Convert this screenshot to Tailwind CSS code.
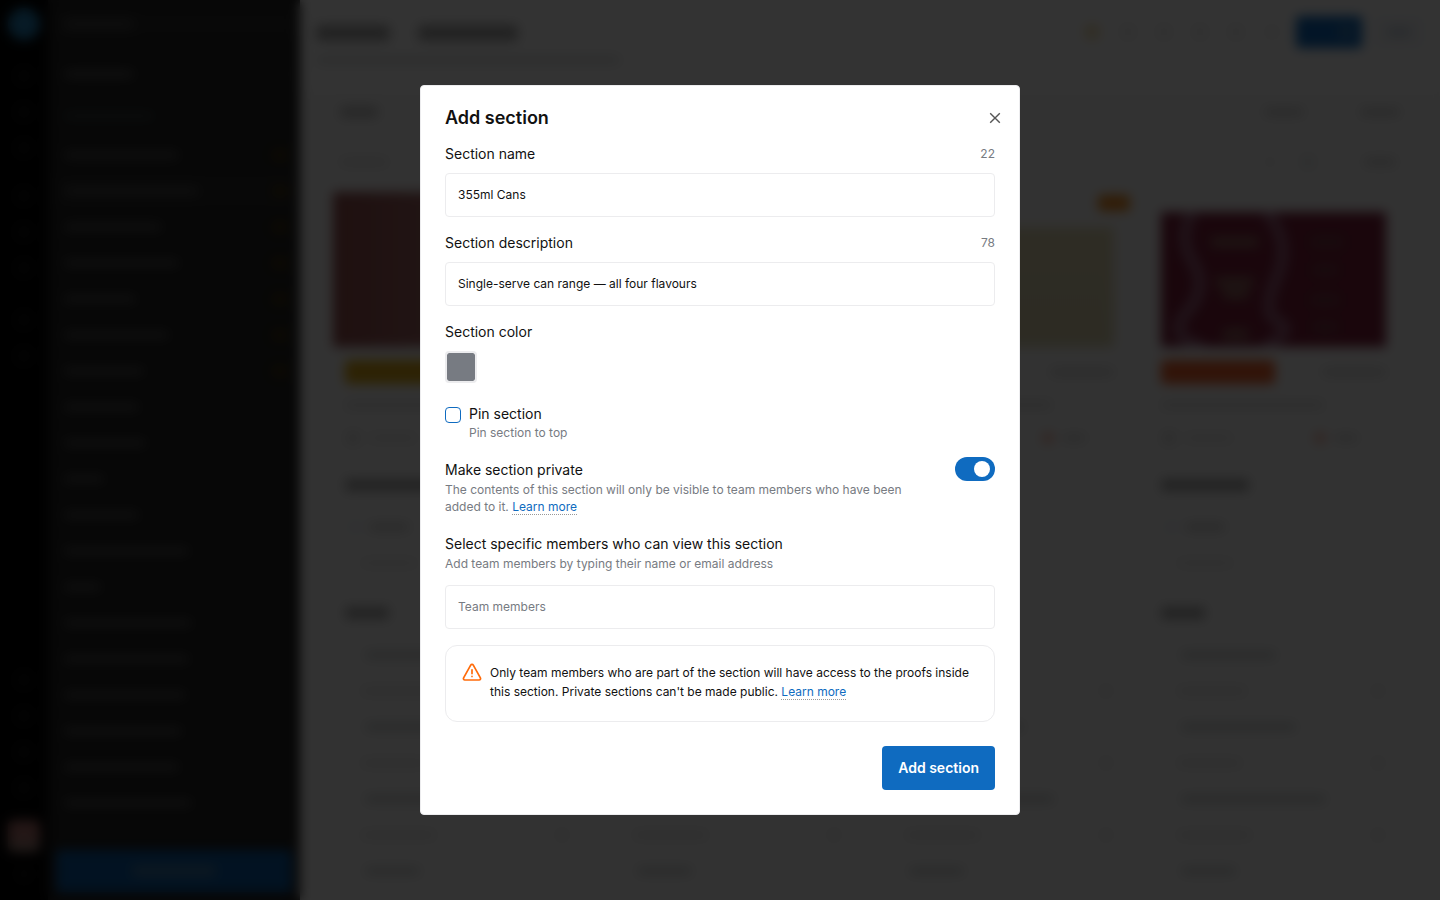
<!DOCTYPE html>
<html lang="en">
<head>
    <meta charset="UTF-8">
    <meta name="viewport" content="width=device-width, initial-scale=1.0">
    <title>Add section</title>
    <script src="https://cdn.jsdelivr.net/npm/@tailwindcss/browser@4"></script>
</head>
<body class="font-['Inter',sans-serif] text-[#111] bg-white h-screen overflow-hidden">

    <!-- Page behind the dialog -->
    <div class="flex h-screen overflow-hidden" aria-hidden="true" inert>
        <nav class="w-12 shrink-0 bg-[#030303] flex flex-col items-center justify-between pt-2 pb-5">
            <div class="flex flex-col items-center">
                <div class="size-8 rounded-full bg-[#2484bd]"></div>
                <div class="rail flex flex-col items-center gap-5 mt-7" data-count="3"></div>
                <div class="rail flex flex-col items-center gap-5 mt-8" data-count="3"></div>
                <div class="rail flex flex-col items-center gap-5 mt-9" data-count="2"></div>
            </div>
            <div class="flex flex-col items-center">
                <div class="rail flex flex-col items-center gap-5 mb-6" data-count="4"></div>
                <div class="size-8 rounded-md overflow-hidden bg-[#a08078]">
                    <div class="h-5 bg-[#b0706c]"></div>
                </div>
                <div class="size-3 rounded-full bg-[#151515] mt-4"></div>
            </div>
        </nav>

        <aside class="w-[252px] shrink-0 bg-[#232323] flex flex-col pl-2 pr-2 pt-3">
            <div class="h-6 shrink-0 bg-[#292929] rounded flex items-center px-2">
                <div class="w-[70px] h-3 rounded bg-[#444]"></div>
            </div>
            <div class="h-[76px] shrink-0 flex items-center justify-between px-2">
                <div class="w-[70px] h-2 rounded bg-[#555]"></div>
                <div class="size-2 rounded bg-[#333]"></div>
            </div>
            <div class="h-[25px] shrink-0 flex items-start px-2">
                <div class="w-[90px] h-2 rounded bg-[#364040]"></div>
            </div>
            <div id="sideList" class="flex-1 overflow-hidden"></div>
            <button class="h-[42px] w-full shrink-0 mb-2 rounded bg-[#0b5ca8] flex items-center justify-center">
                <span class="w-[84px] h-3 rounded bg-[#3f76a6]"></span>
            </button>
        </aside>

        <main class="flex-1 min-w-0 bg-white flex flex-col">
            <header class="flex justify-between h-[92px] shrink-0 pl-4 pr-4">
                <div class="pt-[25px]">
                    <div class="flex gap-7">
                        <div class="w-[74px] h-4 rounded bg-[#a8a8a8]"></div>
                        <div class="w-[100px] h-4 rounded bg-[#a8a8a8]"></div>
                    </div>
                    <div class="w-[304px] h-2 rounded bg-[#dde0e0] mt-[15px]"></div>
                </div>
                <div class="flex items-center h-16">
                    <div class="flex gap-5 mr-4">
                        <div class="size-4 rounded-full bg-[#f4e0ae]"></div>
                        <div class="size-4 rounded-full bg-[#f0f0f0]"></div>
                        <div class="size-4 rounded-full bg-[#f0f0f0]"></div>
                        <div class="size-4 rounded-full bg-[#f0f0f0]"></div>
                        <div class="size-4 rounded-full bg-[#f0f0f0]"></div>
                        <div class="size-4 rounded-full bg-[#f5f5f5]"></div>
                    </div>
                    <div class="w-[66px] h-8 rounded bg-[#0f6bc0] flex items-center justify-end pr-2 mr-3">
                        <div class="w-4 h-3 rounded bg-[#3f80bd]"></div>
                    </div>
                    <div class="w-[50px] h-8 rounded bg-[#f6f8fb] flex items-center justify-center">
                        <div class="w-6 h-2 rounded bg-[#c6d2de]"></div>
                    </div>
                </div>
            </header>
            <div class="flex-1 bg-[#fafafa] overflow-hidden">
                <div class="flex items-center justify-between h-10 pl-10 pr-10">
                    <div class="w-[38px] h-3 rounded bg-[#c4c4c4]"></div>
                    <div class="flex gap-14">
                        <div class="w-10 h-2 rounded bg-[#d0d0d0]"></div>
                        <div class="w-10 h-2 rounded bg-[#d0d0d0]"></div>
                    </div>
                </div>
                <div class="flex items-center justify-between h-[60px] pl-10 pr-11">
                    <div class="w-12 h-2 rounded bg-[#e2e2e2]"></div>
                    <div class="flex items-center gap-6">
                        <div class="size-3 rounded-full bg-[#efefef]"></div>
                        <div class="size-4 rounded-full bg-[#e7ebeb]"></div>
                        <div class="w-8 h-2 rounded bg-[#d2d2d2] ml-6"></div>
                    </div>
                </div>
                <div id="board" class="grid grid-cols-4 gap-[47px] pl-[45px] pr-[54px]"></div>
            </div>
        </main>
    </div>

    <!-- Backdrop and dialog -->
    <div class="fixed inset-0 flex items-center justify-center bg-black/80 backdrop-blur-[6px]">
        <form role="dialog" aria-modal="true" aria-labelledby="dialogTitle" class="w-full max-w-[600px] bg-white border border-[#ececee] rounded px-6 pt-5 pb-6" onsubmit="return false">
            <div class="flex items-center justify-between h-6 mb-[14px]">
                <h1 id="dialogTitle" class="text-[18px] leading-[26px] font-semibold">Add section</h1>
                <button type="button" aria-label="Close" class="size-4 -mr-2 flex items-center justify-center cursor-pointer">
                    <svg class="size-4" viewBox="0 0 16 16" fill="none" stroke="#555" stroke-width="1.4"><path d="M3.2 3.2l9.6 9.6M12.8 3.2l-9.6 9.6"/></svg>
                </button>
            </div>

            <div class="flex items-center justify-between mb-[9px]">
                <label for="sectionName" class="text-sm leading-5">Section name</label>
                <span class="text-xs text-[#777b82]">22</span>
            </div>
            <input id="sectionName" type="text" value="355ml Cans" class="block w-full h-11 px-3 pb-0.5 text-xs border border-[#ececee] rounded mb-4 focus:outline-none">

            <div class="flex items-center justify-between mb-[9px]">
                <label for="sectionDescription" class="text-sm leading-5">Section description</label>
                <span class="text-xs text-[#777b82]">78</span>
            </div>
            <input id="sectionDescription" type="text" value="Single-serve can range — all four flavours" class="block w-full h-11 px-3 pb-0.5 text-xs border border-[#ececee] rounded mb-4 focus:outline-none">

            <label for="sectionColor" class="block text-sm leading-5 mb-[9px]">Section color</label>
            <input id="sectionColor" type="color" value="#777b82" class="block size-8 appearance-none border-2 border-[#ececee] rounded p-0 bg-transparent cursor-pointer [&::-webkit-color-swatch-wrapper]:p-0 [&::-webkit-color-swatch]:border-none [&::-webkit-color-swatch]:rounded-[2px]">

            <div class="flex items-start gap-2 mt-[21px]">
                <input id="pinSection" type="checkbox" class="size-4 mt-[3px] appearance-none border border-[#0f6bc0] rounded bg-white checked:bg-[#0f6bc0]">
                <div>
                    <label for="pinSection" class="block text-sm leading-5">Pin section</label>
                    <p class="text-xs leading-[18px] text-[#777b82]">Pin section to top</p>
                </div>
            </div>

            <div class="flex items-start justify-between mt-[18px]">
                <div class="max-w-[480px]">
                    <label for="privateSection" class="block text-sm leading-5">Make section private</label>
                    <p class="text-xs leading-[17px] text-[#777b82] mt-px">The contents of this section will only be visible to team members who have been added to it. <a href="#" class="text-[#0f6bc0] border-b border-dotted border-[#999]">Learn more</a></p>
                </div>
                <input id="privateSection" type="checkbox" role="switch" checked class="w-10 h-6 -mt-[3px] p-1 shrink-0 appearance-none rounded-full bg-[#b4b7bc] checked:bg-[#0f6bc0] before:block before:size-4 before:rounded-full before:bg-white checked:before:ml-[15px]">
            </div>

            <label for="teamMembers" class="block text-sm leading-5 mt-[19px]">Select specific members who can view this section</label>
            <p class="text-xs leading-[17px] text-[#777b82] mt-px">Add team members by typing their name or email address</p>
            <input id="teamMembers" type="text" placeholder="Team members" class="block w-full h-11 px-3 pb-0.5 text-xs border border-[#ececee] rounded mt-[13px] placeholder:text-[#777b82] focus:outline-none">

            <div class="flex gap-2 border border-[#ececee] rounded-xl px-4 pt-[17px] pb-5 mt-4">
                <svg class="size-5 shrink-0" viewBox="0 0 20 20" fill="none" stroke="#ff6b0a" stroke-width="1.7" stroke-linecap="round" stroke-linejoin="round">
                    <path d="M8.7 2.1 1.6 14.9a1.4 1.4 0 0 0 1.2 2.1h14.4a1.4 1.4 0 0 0 1.2-2.1L11.3 2.1a1.5 1.5 0 0 0-2.6 0z"/>
                    <path d="M10 6.8v3.8"/>
                    <path d="M10 13.4v.1"/>
                </svg>
                <p class="text-xs leading-[19px]">Only team members who are part of the section will have access to the proofs inside this section. Private sections can't be made public. <a href="#" class="text-[#0f6bc0] border-b border-dotted border-[#999]">Learn more</a></p>
            </div>

            <div class="flex justify-end mt-6">
                <button type="submit" class="h-11 px-4 rounded bg-[#0f6bc0] text-white text-sm font-semibold hover:bg-[#0d5ea8] cursor-pointer">Add section</button>
            </div>
        </form>
    </div>

    <script>
        const sideRows = [115, 135, 98, 115, 72, 105, 80, 75, 82, 40, 75, 125, 37, 128, 125, 122, 118, 115, 128];
        const cardRows = [95, 70, 115, 65, 145, 75, 55];

        // Rail icons
        document.querySelectorAll('.rail').forEach(rail => {
            rail.innerHTML = '<div class="size-4 rounded-full bg-[#111]"></div>'.repeat(rail.dataset.count);
        });

        // Sidebar rows, the first seven carry a badge
        document.getElementById('sideList').innerHTML = sideRows.map((width, i) => `
            <div class="h-9 flex items-center justify-between pl-2 pr-1 rounded ${i === 1 ? 'bg-[#292929]' : ''}">
                <div class="h-2 rounded bg-[#505050]" style="width:${width}px"></div>
                ${i < 7 ? '<div class="w-4 h-3 rounded bg-[#443410]"></div>' : ''}
            </div>`).join('');

        const covers = [
            '<div class="h-[156px] -ml-3 bg-linear-to-r from-[#97504f] to-[#b58585]"></div>',
            '<div class="h-[135px] bg-[#b9b9b9]"></div>',
            '<div class="h-4 w-8 -mr-4 self-end rounded bg-[#f08c1e] mb-4"></div><div class="h-[120px] bg-linear-to-b from-[#e6dcb4] to-[#ddd6b0]"></div>',
            `<svg class="w-full h-[135px] bg-[#80203c]" viewBox="0 0 226 135" preserveAspectRatio="none" fill="none">
                <path d="M32 0Q16 24 32 50T26 100T42 135M106 0Q132 30 116 66T118 110T104 135" stroke="#a0607e" stroke-width="12"/>
                <path d="M50 30h48M55 70h38M62 82h26M62 122h26" stroke="#94645f" stroke-width="11"/>
                <path d="M150 30h34M152 58h26M150 88h30M152 115h26" stroke="#7a3844" stroke-width="14"/>
            </svg>`
        ];
        const tags = ['bg-[#e0aa14]', 'bg-[#e0aa14]', 'bg-[#e0aa14]', 'bg-[#f4632c]'];

        document.getElementById('board').innerHTML = covers.map((cover, i) => `
            <div>
                <div class="h-[155px] flex flex-col justify-end">${cover}</div>
                <div class="flex items-center justify-between h-[50px]">
                    <div class="w-[114px] h-6 rounded ${tags[i]}"></div>
                    <div class="w-16 h-2 rounded bg-[#d8d8d8]"></div>
                </div>
                <div class="w-[163px] h-2 rounded bg-[#dedede] mt-1"></div>
                <div class="flex items-center gap-2 h-[58px]">
                    <div class="size-4 rounded-full bg-[#e2e2e2]"></div>
                    <div class="w-12 h-2 rounded bg-[#e6e6e6] mr-auto"></div>
                    <div class="size-3 rounded-full bg-[#f2b5a6]"></div>
                    <div class="w-6 h-2 rounded bg-[#dadada] mr-7"></div>
                </div>
                <div class="w-[88px] h-3 rounded bg-[#a8a8a8] mt-3"></div>
                <div class="flex items-center gap-2 h-12 pl-1 mt-3">
                    <div class="size-3 rounded-full bg-[#e8eef5]"></div>
                    <div class="w-10 h-2 rounded bg-[#cecece]"></div>
                </div>
                <div class="w-14 h-2 rounded bg-[#e8e8e8] ml-4 mt-2"></div>
                <div class="w-11 h-3 rounded bg-[#a8a8a8] mt-10"></div>
                <div class="mt-[18px]">
                    ${cardRows.map((width, n) => `
                    <div class="h-9 flex items-center justify-between ${n % 2 ? 'pl-4' : 'pl-5'}">
                        <div class="h-2 rounded ${n % 2 ? 'bg-[#e4e4e4]' : 'bg-[#ced2d2]'}" style="width:${width}px"></div>
                        ${n % 2 ? '<div class="size-4 rounded-full bg-[#f0f0f0]"></div>' : ''}
                    </div>`).join('')}
                </div>
            </div>`).join('');
    </script>
</body>
</html>
